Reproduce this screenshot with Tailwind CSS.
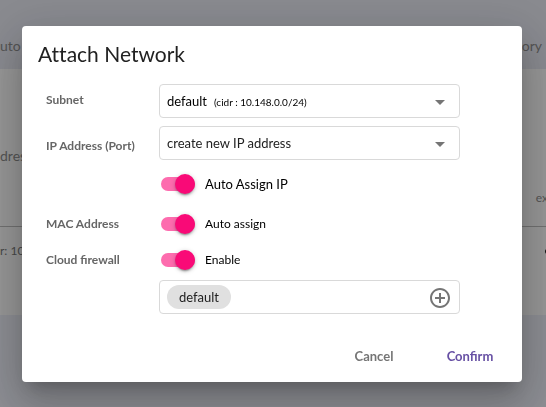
<!DOCTYPE html>
<html lang="en">
<head>
<meta charset="utf-8">
<meta name="viewport" content="width=device-width, initial-scale=1">
<title>Attach Network</title>
<script src="https://cdn.jsdelivr.net/npm/@tailwindcss/browser@4"></script>
</head>
<body class="min-h-screen overflow-hidden bg-[#e9ebf4] font-[Lato,sans-serif] text-black">
<!-- Page behind the dialog -->
<div aria-hidden="true" class="text-[#8c8c8c]">
  <div class="flex h-[69px] items-end justify-between bg-[#e4e6ef] pr-1 pb-[13px] text-sm leading-5"><span>uto</span><span>ory</span></div>
  <div class="h-[246px] bg-[#fafafa]">
    <div class="flex h-[158px] items-start justify-between border-b border-[#bbb] pt-[77px]">
      <span class="text-sm leading-5">dress</span><span class="-mr-[2px] pt-[44px] text-xs leading-4">ex</span>
    </div>
    <div class="flex items-center justify-between pt-4 text-xs leading-4"><span class="text-[#777]">r: 10.148</span><span class="-mr-1 size-[5px] rounded-full bg-[#222]"></span></div>
  </div>
</div>
<!-- Dialog -->
<div class="fixed inset-0 flex items-start justify-center bg-black/40 py-[26px] pr-6 pl-[22px]">
  <form role="dialog" aria-labelledby="title" class="w-full max-w-[500px] rounded bg-white pt-[14px] pb-[7px] shadow-[0_11px_15px_-7px_rgba(0,0,0,0.2),0_24px_38px_3px_rgba(0,0,0,0.14),0_9px_46px_8px_rgba(0,0,0,0.12)]">
    <h2 id="title" class="px-4 text-[21px] leading-7 text-[#212121] [font-variant-ligatures:none]">Attach Network</h2>
    <div class="mt-4 grid grid-cols-[113px_1fr] items-center pr-[62px] pl-6 text-[13px] leading-4">
      <label for="subnet" class="pb-0.5 text-xs font-bold text-[#666]">Subnet</label>
      <div class="grid items-center">
        <select id="subnet" class="col-start-1 row-start-1 h-[34px] w-full appearance-none rounded border border-[#d9d9d9] bg-white px-[7px] text-[13px]"><option>default</option></select>
        <span class="pointer-events-none col-start-1 row-start-1 pt-0.5 pl-[55px] text-[10px]">(cidr : 10.148.0.0/24)</span>
        <svg class="pointer-events-none col-start-1 row-start-1 mt-0.5 mr-2 size-6 justify-self-end fill-[#757575]" viewBox="0 0 24 24"><path d="M7 10l5 5 5-5z"/></svg>
      </div>
      <label for="ip" class="mt-2 pt-[6px] text-xs font-bold text-[#666]">IP Address (Port)</label>
      <div class="mt-2 grid items-center">
        <select id="ip" class="col-start-1 row-start-1 h-[34px] w-full appearance-none rounded border border-[#d9d9d9] bg-white px-[7px] text-[13px] text-[#212121]"><option>create new IP address</option></select>
        <svg class="pointer-events-none col-start-1 row-start-1 mt-0.5 mr-2 size-6 justify-self-end fill-[#757575]" viewBox="0 0 24 24"><path d="M7 10l5 5 5-5z"/></svg>
      </div>
      <label class="col-start-2 mt-[6px] flex h-9 items-center gap-[10px] pl-0.5">
        <input type="checkbox" role="switch" checked class="relative h-[14px] w-[34px] appearance-none rounded-full bg-[#fd6cae] before:absolute before:-top-[3px] before:right-0 before:size-5 before:rounded-full before:bg-[#f90a77] before:shadow-[0_3px_1px_-2px_rgba(0,0,0,0.2),0_2px_2px_rgba(0,0,0,0.14),0_1px_5px_rgba(0,0,0,0.2)]">
        Auto Assign IP
      </label>
      <span id="mac" class="mt-1 text-xs font-bold text-[#666]">MAC Address</span>
      <label class="mt-1 flex h-9 items-center gap-[10px] pl-0.5 text-xs">
        <input type="checkbox" role="switch" checked aria-describedby="mac" class="relative h-[14px] w-[34px] appearance-none rounded-full bg-[#fd6cae] before:absolute before:-top-[3px] before:right-0 before:size-5 before:rounded-full before:bg-[#f90a77] before:shadow-[0_3px_1px_-2px_rgba(0,0,0,0.2),0_2px_2px_rgba(0,0,0,0.14),0_1px_5px_rgba(0,0,0,0.2)]">
        Auto assign
      </label>
      <span id="firewall" class="text-xs font-bold text-[#666]">Cloud firewall</span>
      <label class="flex h-9 items-center gap-[10px] pl-0.5 text-xs">
        <input type="checkbox" role="switch" checked aria-describedby="firewall" class="relative h-[14px] w-[34px] appearance-none rounded-full bg-[#fd6cae] before:absolute before:-top-[3px] before:right-0 before:size-5 before:rounded-full before:bg-[#f90a77] before:shadow-[0_3px_1px_-2px_rgba(0,0,0,0.2),0_2px_2px_rgba(0,0,0,0.14),0_1px_5px_rgba(0,0,0,0.2)]">
        Enable
      </label>
      <div class="col-start-2 mt-0.5 flex h-[34px] items-center justify-between rounded border border-[#d9d9d9] pr-[7px] pl-[7px]">
        <span class="flex h-6 items-center rounded-full bg-[#e0e0e0] px-3 text-[#212121]">default</span>
        <button type="button" aria-label="Add firewall" class="pt-0.5"><svg class="size-6 fill-[#757575]" viewBox="0 0 24 24"><path d="M13 7h-2v4H7v2h4v4h2v-4h4v-2h-4V7zm-1-5C6.480 2 2 6.480 2 12s4.480 10 10 10 10-4.480 10-10S17.520 2 12 2zm0 18c-4.410 0-8-3.590-8-8s3.590-8 8-8 8 3.590 8 8-3.590 8-8 8z"/></svg></button>
      </div>
    </div>
    <div class="mt-[25px] flex justify-end gap-2 pr-2 text-[13px] font-bold">
      <button type="button" class="h-9 w-[88px] text-[#757575]">Cancel</button>
      <button type="submit" class="h-9 w-[88px] text-[#6750a4]">Confirm</button>
    </div>
  </form>
</div>
</body>
</html>
